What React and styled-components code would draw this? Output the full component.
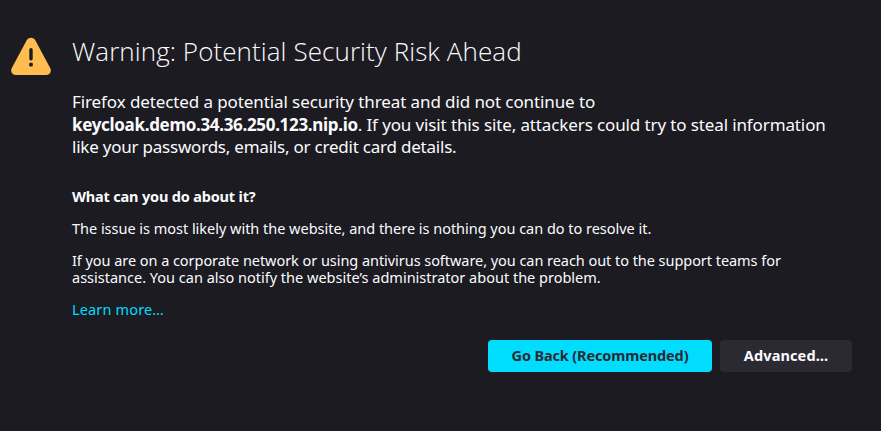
import React from "react";
import styled, { createGlobalStyle } from "styled-components";

const GlobalStyle = createGlobalStyle`
  * { box-sizing: border-box; }
  body {
    margin: 0;
    background: #1c1b22;
    color: #fbfbfe;
    font-family: "Noto Sans", "Open Sans", sans-serif;
  }
`;

const Page = styled.main`
  display: grid;
  grid-template-columns: 40px 780px;
  column-gap: 21px;
  align-items: start;
  width: 881px;
  height: 431px;
  padding: 34px 0 0 11px;
  overflow: hidden;
`;

const WarningIcon = styled.svg`
  display: block;
  width: 40px;
  height: 38px;
  margin-top: 3px;
`;

const Content = styled.section`
  display: flex;
  flex-direction: column;
`;

const Line = styled.span`
  display: block;
  white-space: nowrap;
  letter-spacing: ${(p) => p.$spacing || 0}px;
`;

const Run = styled.span`
  letter-spacing: ${(p) => p.$spacing || 0}px;
`;

const Host = styled.strong`
  font-weight: 700;
  letter-spacing: -0.32px;
`;

const Title = styled.h1`
  margin: 0 0 22px;
  font-family: "Open Sans", sans-serif;
  font-size: 26px;
  font-weight: 300;
  line-height: 35px;
  letter-spacing: 0.08px;
  white-space: nowrap;
`;

const Description = styled.p`
  margin: 0 0 29px;
  font-size: 17px;
  line-height: 22.5px;
`;

const Advice = styled.div`
  display: flex;
  flex-direction: column;
  gap: 15px;
  font-size: 14.5px;
  line-height: 17px;
`;

const Heading = styled.h2`
  margin: 0;
  font-size: inherit;
  font-weight: 700;
  line-height: inherit;
  letter-spacing: -0.18px;
`;

const Paragraph = styled.p`
  margin: 0;
`;

const Link = styled.a`
  align-self: flex-start;
  color: #00ddff;
  text-decoration: none;
  letter-spacing: 0.15px;
`;

const Actions = styled.div`
  display: flex;
  justify-content: flex-end;
  gap: 8px;
  margin-top: 22px;
`;

const Button = styled.button`
  width: ${(p) => (p.$primary ? 224 : 132)}px;
  height: 32px;
  padding: 0 0 2px;
  border: 0;
  border-radius: 4px;
  background: ${(p) => (p.$primary ? "#00ddff" : "#2b2a33")};
  color: ${(p) => (p.$primary ? "#2b2a33" : "#fbfbfe")};
  font: 700 14.5px/30px "Noto Sans", "Open Sans", sans-serif;
  letter-spacing: ${(p) => (p.$primary ? -0.14 : 0.12)}px;
  white-space: nowrap;
`;

export default function App() {
  return (
    <>
      <GlobalStyle />
      <Page>
        <WarningIcon viewBox="0 0 40 38" aria-label="Warning">
          <path
            fill="#ffbd4f"
            d="M16 2.8C17.7 0.1 22.3 0.1 24 2.8L39.2 31C41 34.5 38.8 38 35 38H5C1.2 38 -1 34.5 0.8 31Z"
          />
          <rect x="18.3" y="11" width="3.4" height="12.5" rx="1.7" fill="#1c1b22" />
          <rect x="18.2" y="25.8" width="3.6" height="3.8" rx="1.3" fill="#1c1b22" />
        </WarningIcon>
        <Content>
          <Title>Warning: Potential Security Risk Ahead</Title>
          <Description>
            <Line $spacing={-0.1}>
              Firefox detected a potential security threat and did not continue to
            </Line>
            <Line>
              <Host>keycloak.demo.34.36.250.123.nip.io</Host>
              <Run $spacing={-0.12}>
                . If you visit this site, attackers could try to steal information
              </Run>
            </Line>
            <Line $spacing={-0.22}>like your passwords, emails, or credit card details.</Line>
          </Description>
          <Advice>
            <Heading>What can you do about it?</Heading>
            <Paragraph>
              <Line $spacing={-0.02}>
                The issue is most likely with the website, and there is nothing you can do to
                resolve it.
              </Line>
            </Paragraph>
            <Paragraph>
              <Line $spacing={-0.05}>
                If you are on a corporate network or using antivirus software, you can reach out to
                the support teams for
              </Line>
              <Line>
                assistance. You can also notify the website’s administrator about the problem.
              </Line>
            </Paragraph>
            <Link href="#">Learn more…</Link>
          </Advice>
          <Actions>
            <Button $primary>Go Back (Recommended)</Button>
            <Button>Advanced…</Button>
          </Actions>
        </Content>
      </Page>
    </>
  );
}
